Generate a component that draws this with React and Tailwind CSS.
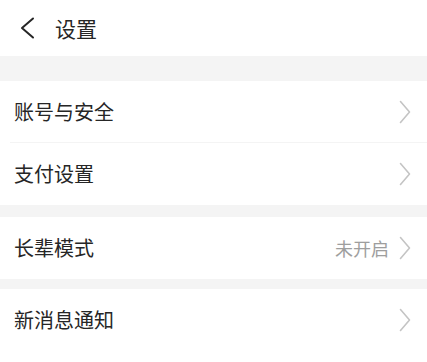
import React from 'react';

const Chevron = () => (
  <svg width="12" height="24" viewBox="0 0 12 24" fill="none" className="shrink-0">
    <path d="M1.5 1.5 L10.5 12 L1.5 22.5" stroke="#c4c4c4" strokeWidth="1.6" strokeLinecap="round" strokeLinejoin="round" />
  </svg>
);

const Row = ({ label, value, divider }) => (
  <div className="relative flex h-[62px] items-center justify-between bg-white pl-[14px] pr-[16px]">
    <span className="text-[20px] leading-none text-[#262626]">{label}</span>
    <div className="flex items-center gap-[10px]">
      {value && <span className="text-[18px] leading-none text-[#9e9e9e]">{value}</span>}
      <Chevron />
    </div>
    {divider && <div className="absolute bottom-0 left-[10px] right-0 h-px bg-[#f4f4f4]" />}
  </div>
);

const App = () => {
  return (
    <div
      className="flex h-[362px] w-[427px] flex-col overflow-hidden bg-white"
      style={{ fontFamily: '"Noto Sans CJK SC", "Noto Sans", sans-serif' }}
    >
      {/* Header */}
      <div className="flex h-[56px] items-center bg-white pl-[19px]">
        <svg width="16" height="22" viewBox="0 0 16 22" fill="none">
          <path d="M14 1.5 L3 11 L14 20.5" stroke="#262626" strokeWidth="2" strokeLinecap="round" strokeLinejoin="round" />
        </svg>
        <span className="ml-[20px] text-[21px] leading-none text-[#262626]">设置</span>
      </div>

      <div className="h-[25px] bg-[#f4f4f4]" />

      <Row label="账号与安全" divider />
      <Row label="支付设置" />

      <div className="h-[12px] bg-[#f4f4f4]" />

      <Row label="长辈模式" value="未开启" />

      <div className="h-[10px] bg-[#f4f4f4]" />

      <Row label="新消息通知" />

      <div className="flex-1 bg-white" />
    </div>
  );
};

export default App;
